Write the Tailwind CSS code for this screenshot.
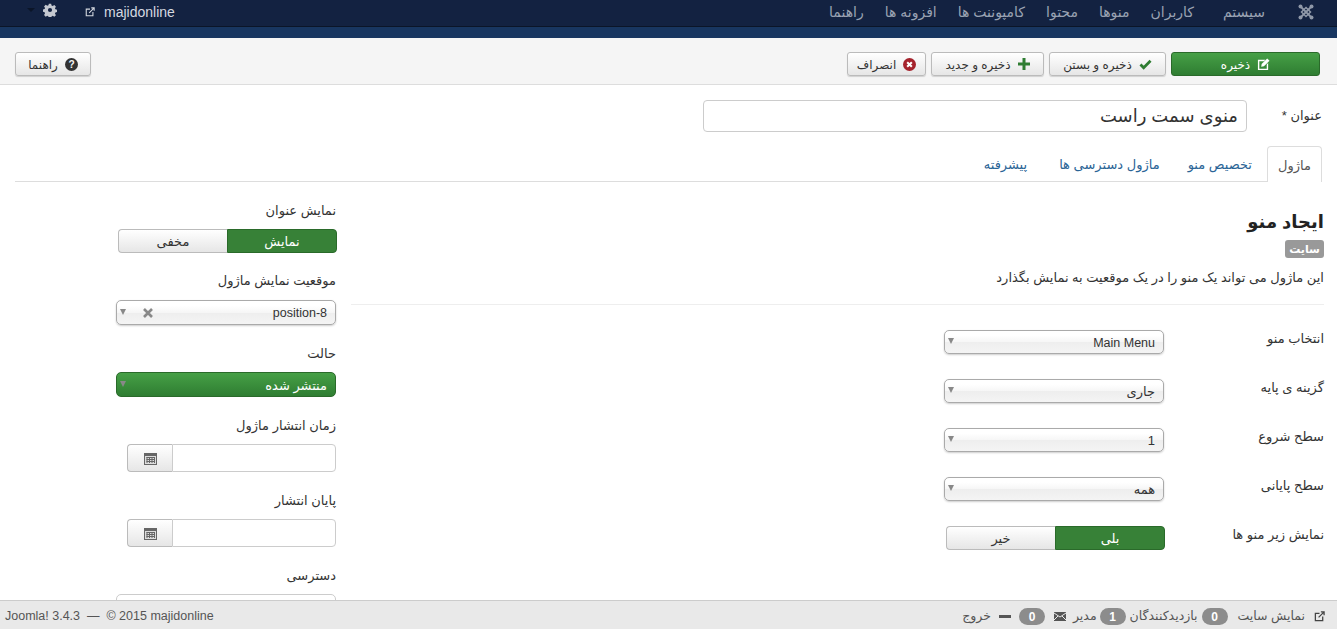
<!DOCTYPE html>
<html dir="rtl" lang="fa">
  <head>
    <meta charset="UTF-8" />
    <meta name="viewport" content="width=device-width, initial-scale=1.0" />
    <script src="https://cdn.jsdelivr.net/npm/@tailwindcss/browser@4"></script>
  </head>
  <body class="h-[629px] overflow-hidden flex flex-col bg-white text-[13px] text-[#333] font-['Liberation_Sans','DejaVu_Sans',sans-serif]">
    <!-- top nav -->
    <nav class="h-[27px] shrink-0 bg-[#132241] border-b border-[#0b1528] flex items-center pr-[23px] pb-[2px] text-[14px] text-[#9aa3b3]">
      <svg class="w-[16px] h-[16px] ml-[33px]" viewBox="0 0 16 16" fill="none" stroke="#8f98a8">
        <path d="M3 3 13 13M13 3 3 13" stroke-width="1.800" />
        <path d="M8 3.500 12.500 8 8 12.500 3.500 8Z" stroke-width="1.500" />
        <circle cx="2.500" cy="2.500" r="2" fill="#8f98a8" stroke="none" />
        <circle cx="13.500" cy="2.500" r="2" fill="#8f98a8" stroke="none" />
        <circle cx="2.500" cy="13.500" r="2" fill="#8f98a8" stroke="none" />
        <circle cx="13.500" cy="13.500" r="2" fill="#8f98a8" stroke="none" />
      </svg>
      <ul class="flex gap-[21px]">
        <li class="w-[50px]">سیستم</li>
        <li>کاربران</li>
        <li>منوها</li>
        <li>محتوا</li>
        <li>کامپوننت ها</li>
        <li>افزونه ها</li>
        <li>راهنما</li>
      </ul>
      <div class="mr-auto flex items-center pl-[27px] text-[#d5d9e0]">
        <span dir="ltr" class="text-[14px] ml-[9px]">majidonline</span>
        <svg class="w-[10px] h-[10px] ml-[28px]" viewBox="0 0 12 12" fill="none" stroke="#d5d9e0" stroke-width="1.3">
          <path d="M6 2.5H1.5v8h8V6M5 7l6-6M7.5 1H11v3.5" />
        </svg>
        <svg class="w-[14px] h-[14px] ml-[8px] -mt-[4px]" viewBox="0 0 14 14" fill="#c4c8d0">
          <path fill-rule="evenodd" d="M5.7 0h2.6l.4 2 1.3.6 1.8-1.1 1.8 1.8-1.1 1.8.5 1.2 2 .5v2.500l-2 .5-.5 1.200 1.100 1.800-1.800 1.800-1.800-1.100-1.300.6-.4 2H5.700l-.4-2-1.300-.6-1.800 1.100L.4 12.500l1.100-1.800L1 9.500 -1 9V6.500l2-.5.500-1.200L.4 3 2.200 1.200 4 2.300l1.300-.6zM7 4.700a2.300 2.300 0 1 0 0 4.600 2.300 2.300 0 0 0 0-4.600z" transform="translate(0.700 0.700) scale(0.9)" />
        </svg>
        <span class="w-0 h-0 -mt-[4px] border-x-[4px] border-x-transparent border-t-[4px] border-t-[#0b1528]"></span>
      </div>
    </nav>
    <div class="h-[11px] shrink-0 bg-[#183660]"></div>

    <!-- toolbar -->
    <div class="h-[47px] shrink-0 bg-[#f5f5f5] border-b border-[#ddd] flex items-start gap-[5px] pt-[14px] pr-[17px] pl-[15px] text-[12px]">
      <button class="w-[149px] h-[24px] rounded-[3px] border border-[#2a6a2a] bg-gradient-to-b from-[#46a046] to-[#2f7d32] text-white flex items-center justify-center gap-[7px]">
        <svg class="w-[13px] h-[13px]" viewBox="0 0 14 14" fill="#fff"><path d="M1 2h8L7.500 3.500H2.500v8h8V7L12 5.500V13H1z" /><path d="M11 0.500 13.500 3 7.500 9 4.500 9.500 5 6.500z" /></svg>
        <span class="pt-[2px]">ذخیره</span>
      </button>
      <button class="w-[117px] h-[24px] rounded-[3px] border border-[#bbb] bg-gradient-to-b from-white to-[#e6e6e6] flex items-center justify-center gap-[7px] shadow-[0_1px_1px_rgba(0,0,0,0.15)]">
        <svg class="w-[13px] h-[11px]" viewBox="0 0 14 12" fill="none" stroke="#2f7d32" stroke-width="3"><path d="M1.500 6 5 9.500 12.500 2" /></svg>
        <span class="pt-[2px]">ذخیره و بستن</span>
      </button>
      <button class="w-[113px] h-[24px] rounded-[3px] border border-[#bbb] bg-gradient-to-b from-white to-[#e6e6e6] flex items-center justify-center gap-[7px] shadow-[0_1px_1px_rgba(0,0,0,0.15)]">
        <svg class="w-[12px] h-[12px]" viewBox="0 0 12 12" fill="#2f7d32"><path d="M4.500 0h3v4.500H12v3H7.500V12h-3V7.500H0v-3h4.500z" /></svg>
        <span class="pt-[2px]">ذخیره و جدید</span>
      </button>
      <button class="w-[79px] h-[24px] rounded-[3px] border border-[#bbb] bg-gradient-to-b from-white to-[#e6e6e6] flex items-center justify-center gap-[7px] shadow-[0_1px_1px_rgba(0,0,0,0.15)]">
        <svg class="w-[13px] h-[13px]" viewBox="0 0 14 14"><circle cx="7" cy="7" r="7" fill="#a5222c" /><path d="M4.500 4.500 9.500 9.500M9.500 4.500 4.500 9.500" stroke="#fff" stroke-width="2.200" /></svg>
        <span class="pt-[2px]">انصراف</span>
      </button>
      <button class="mr-auto w-[76px] h-[24px] rounded-[3px] border border-[#bbb] bg-gradient-to-b from-white to-[#e6e6e6] flex items-center justify-center gap-[7px] shadow-[0_1px_1px_rgba(0,0,0,0.15)]">
        <svg class="w-[13px] h-[13px]" viewBox="0 0 14 14"><circle cx="7" cy="7" r="7" fill="#333" /><text x="7" y="11" text-anchor="middle" font-size="11" font-weight="700" fill="#f5f5f5" font-family="Liberation Sans">?</text></svg>
        <span class="pt-[2px]">راهنما</span>
      </button>
    </div>

    <!-- form -->
    <main class="flex-1 min-h-0 overflow-hidden pr-[13px] pl-[15px]">
      <div class="flex items-start pt-[15px] pr-[2px]">
        <label class="w-[75px] pt-[7px] leading-[18px] shrink-0">عنوان *</label>
        <input value="منوی سمت راست" class="w-[544px] h-[32px] rounded-[4px] border border-[#ccc] px-[8px] text-[18px] text-[#333] text-right" />
      </div>

      <ul class="flex mt-[14px] border-b border-[#ddd] h-[36px] text-[13px] text-[#2a6496] mr-[2px]">
        <li class="w-[55px] h-[36px] pt-[3px] bg-white border border-b-0 border-[#ddd] rounded-t-[4px] flex items-center justify-center text-[#555]">ماژول</li>
        <li class="pr-[15px] pl-[14px] pt-[3px] flex items-center">تخصیص منو</li>
        <li class="pr-[14px] pl-[14px] pt-[3px] flex items-center">ماژول دسترسی ها</li>
        <li class="pr-[18px] pl-[14px] pt-[3px] flex items-center">پیشرفته</li>
      </ul>

      <div class="flex items-start">
        <!-- main column -->
        <section class="w-[973px] shrink-0 pt-[29px]">
          <h2 class="text-[18px] leading-[22px] font-bold text-[#222]">ایجاد منو</h2>
          <span class="block mt-[7px] w-[39px] h-[18px] rounded-[3px] bg-[#999] text-white text-[11px] font-bold text-center leading-[18px]">سایت</span>
          <p class="mt-[11px] leading-[18px]">این ماژول می تواند یک منو را در یک موقعیت به نمایش بگذارد</p>
          <hr class="mt-[17px] border-[#eee]" />

          <div class="flex items-start mt-[25px] h-[49px]">
            <label class="w-[160px] pt-[1px] leading-[16px]">انتخاب منو</label>
            <div class="w-[220px] h-[24px] rounded-[5px] border border-[#aaa] bg-[linear-gradient(#fff_20%,#f6f6f6_50%,#eee_52%,#f4f4f4_100%)] shadow-[0_1px_2px_rgba(0,0,0,0.2)] flex justify-between items-center px-[8px]">
              <span dir="ltr" class="text-[12.5px] pt-[2px]">Main Menu</span>
              <span class="w-0 h-0 mb-[2px] -ml-[5px] border-x-[3.5px] border-x-transparent border-t-[6px] border-t-[#888]"></span>
            </div>
          </div>
          <div class="flex items-start h-[49px]">
            <label class="w-[160px] pt-[1px] leading-[16px]">گزینه ی پایه</label>
            <div class="w-[220px] h-[24px] rounded-[5px] border border-[#aaa] bg-[linear-gradient(#fff_20%,#f6f6f6_50%,#eee_52%,#f4f4f4_100%)] shadow-[0_1px_2px_rgba(0,0,0,0.2)] flex justify-between items-center px-[8px]">
              <span class="pt-[2px]">جاری</span>
              <span class="w-0 h-0 mb-[2px] -ml-[5px] border-x-[3.5px] border-x-transparent border-t-[6px] border-t-[#888]"></span>
            </div>
          </div>
          <div class="flex items-start h-[49px]">
            <label class="w-[160px] pt-[1px] leading-[16px]">سطح شروع</label>
            <div class="w-[220px] h-[24px] rounded-[5px] border border-[#aaa] bg-[linear-gradient(#fff_20%,#f6f6f6_50%,#eee_52%,#f4f4f4_100%)] shadow-[0_1px_2px_rgba(0,0,0,0.2)] flex justify-between items-center px-[8px]">
              <span class="pt-[2px]">1</span>
              <span class="w-0 h-0 mb-[2px] -ml-[5px] border-x-[3.5px] border-x-transparent border-t-[6px] border-t-[#888]"></span>
            </div>
          </div>
          <div class="flex items-start h-[49px]">
            <label class="w-[160px] pt-[1px] leading-[16px]">سطح پایانی</label>
            <div class="w-[220px] h-[24px] rounded-[5px] border border-[#aaa] bg-[linear-gradient(#fff_20%,#f6f6f6_50%,#eee_52%,#f4f4f4_100%)] shadow-[0_1px_2px_rgba(0,0,0,0.2)] flex justify-between items-center px-[8px]">
              <span class="pt-[2px]">همه</span>
              <span class="w-0 h-0 mb-[2px] -ml-[5px] border-x-[3.5px] border-x-transparent border-t-[6px] border-t-[#888]"></span>
            </div>
          </div>
          <div class="flex items-start h-[49px]">
            <label class="w-[159px] pt-[1px] leading-[16px]">نمایش زیر منو ها</label>
            <div class="w-[219px] h-[24px] flex">
              <span class="w-[110px] pt-[2px] bg-[#378137] border border-[#2a6a2a] rounded-r-[4px] text-white flex items-center justify-center">بلی</span>
              <span class="w-[109px] pt-[2px] border border-r-0 border-[#bbb] rounded-l-[4px] bg-gradient-to-b from-white to-[#e6e6e6] flex items-center justify-center">خیر</span>
            </div>
          </div>
        </section>

        <!-- side column -->
        <aside class="w-[221px] mr-[14px] pt-[20px]">
          <label class="block pt-[1px] leading-[16px] pr-[1px]">نمایش عنوان</label>
          <div class="mt-[10px] w-[219px] h-[24px] flex">
            <span class="w-[110px] pt-[2px] bg-[#378137] border border-[#2a6a2a] rounded-r-[4px] text-white flex items-center justify-center">نمایش</span>
            <span class="w-[109px] pt-[2px] border border-r-0 border-[#bbb] rounded-l-[4px] bg-gradient-to-b from-white to-[#e6e6e6] flex items-center justify-center">مخفی</span>
          </div>

          <label class="block mt-[19px] pt-[1px] leading-[16px] pr-[1px]">موقعیت نمایش ماژول</label>
          <div class="mt-[11px] w-[220px] h-[25px] mr-[1px] rounded-[5px] border border-[#aaa] bg-[linear-gradient(#fff_20%,#f6f6f6_50%,#eee_52%,#f4f4f4_100%)] shadow-[0_1px_2px_rgba(0,0,0,0.2)] flex items-center px-[8px]">
            <span dir="ltr" class="text-[12.5px] pt-[2px]">position-8</span>
            <svg class="mr-auto ml-[17px] w-[10px] h-[10px]" viewBox="0 0 10 10" stroke="#888" stroke-width="2.600"><path d="M1 1 9 9M9 1 1 9" /></svg>
            <span class="w-0 h-0 mb-[2px] -ml-[5px] border-x-[3.5px] border-x-transparent border-t-[6px] border-t-[#888]"></span>
          </div>

          <label class="block mt-[20px] pt-[1px] leading-[16px] pr-[1px]">حالت</label>
          <div class="mt-[10px] w-[220px] h-[25px] mr-[1px] rounded-[5px] border border-[#2a6a2a] bg-gradient-to-b from-[#46a046] to-[#2f7d32] flex justify-between items-center px-[8px] text-white">
            <span class="pt-[2px]">منتشر شده</span>
            <span class="w-0 h-0 mb-[2px] -ml-[5px] border-x-[3.5px] border-x-transparent border-t-[6px] border-t-[#888]"></span>
          </div>

          <label class="block mt-[20px] pt-[1px] leading-[16px] pr-[1px]">زمان انتشار ماژول</label>
          <div class="mt-[10px] mr-[1px] w-[209px] h-[28px] flex">
            <input class="w-[164px] border border-[#ccc] rounded-r-[4px] bg-white" />
            <span class="w-[45px] border border-r-0 border-[#bbb] rounded-l-[4px] bg-gradient-to-b from-white to-[#e6e6e6] flex items-center justify-center">
              <svg class="w-[13px] h-[13px]" viewBox="0 0 13 13"><rect y="1" width="13" height="12" fill="#666" /><rect x="1" y="4" width="11" height="8" fill="#ddd" /><path d="M2.500 5.500h8M2.500 7.500h8M2.500 9.500h8M3 5v6M5.500 5v6M8 5v6M10.500 5v6" stroke="#666" /></svg>
            </span>
          </div>

          <label class="block mt-[20px] pt-[1px] leading-[16px] pr-[1px]">پایان انتشار</label>
          <div class="mt-[10px] mr-[1px] w-[209px] h-[28px] flex">
            <input class="w-[164px] border border-[#ccc] rounded-r-[4px] bg-white" />
            <span class="w-[45px] border border-r-0 border-[#bbb] rounded-l-[4px] bg-gradient-to-b from-white to-[#e6e6e6] flex items-center justify-center">
              <svg class="w-[13px] h-[13px]" viewBox="0 0 13 13"><rect y="1" width="13" height="12" fill="#666" /><rect x="1" y="4" width="11" height="8" fill="#ddd" /><path d="M2.500 5.500h8M2.500 7.500h8M2.500 9.500h8M3 5v6M5.500 5v6M8 5v6M10.500 5v6" stroke="#666" /></svg>
            </span>
          </div>

          <label class="block mt-[20px] pt-[1px] leading-[16px] pr-[1px]">دسترسی</label>
          <div class="mt-[10px] mr-[1px] w-[220px] h-[25px] rounded-[5px] border border-[#ccc]"></div>
        </aside>
      </div>
    </main>

    <!-- status bar -->
    <footer class="h-[29px] shrink-0 bg-[#e9e9e9] border-t border-[#ccc] flex items-center pr-[12px] pl-[5px] pt-[3px] text-[12.5px] text-[#555]">
      <svg class="w-[11px] h-[11px] ml-[9px]" viewBox="0 0 12 12" fill="none" stroke="#444" stroke-width="1.400"><path d="M6 2.500H1.500v8h8V6M5 7l6-6M7.500 1H11v3.500" /></svg>
      <span class="ml-[10px]">نمایش سایت</span>
      <span class="w-[26px] h-[17px] rounded-full bg-[#8c8c8c] text-white text-[12px] font-bold flex items-center justify-center ml-[4px]">0</span>
      <span class="ml-[4px]">بازدیدکنندگان</span>
      <span class="w-[26px] h-[17px] rounded-full bg-[#8c8c8c] text-white text-[12px] font-bold flex items-center justify-center ml-[3px]">1</span>
      <span class="ml-[7px]">مدیر</span>
      <svg class="w-[12px] h-[9px] ml-[9px]" viewBox="0 0 12 9"><rect width="12" height="9" fill="#555" /><path d="M0 1 6 5 12 1M0 8 4 4M12 8 8 4" stroke="#e9e9e9" fill="none" /></svg>
      <span class="w-[26px] h-[17px] rounded-full bg-[#8c8c8c] text-white text-[12px] font-bold flex items-center justify-center ml-[8px]">0</span>
      <span class="w-[12px] h-[3px] bg-[#555] ml-[8px]"></span>
      <span>خروج</span>
      <span dir="ltr" class="mr-auto">Joomla! 3.4.3 &nbsp;—&nbsp; © 2015 majidonline</span>
    </footer>
  </body>
</html>
